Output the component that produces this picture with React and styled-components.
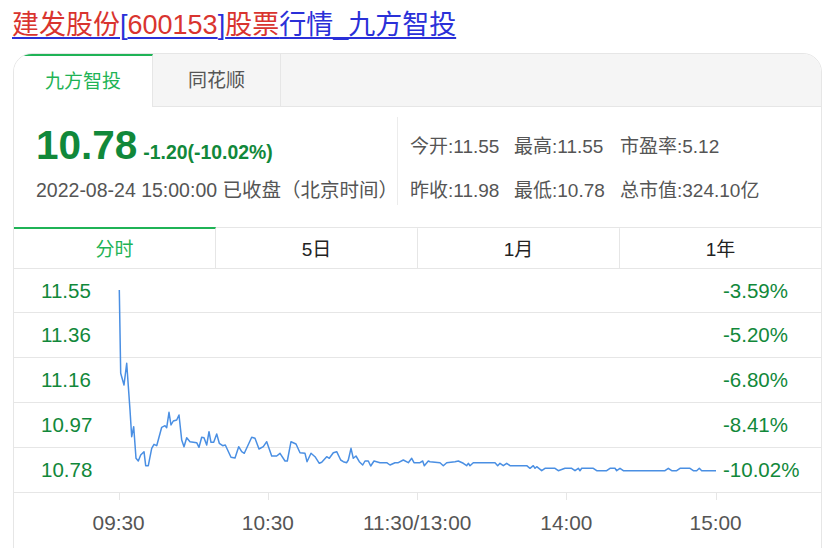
import React from "react";
import styled, { createGlobalStyle } from "styled-components";

const GlobalStyle = createGlobalStyle`
  body {
    margin: 0;
    background: #fff;
    font-family: "Liberation Sans", Arial, "Noto Sans CJK SC", sans-serif;
  }
`;

const GREEN = "#11883a";
const TAB_GREEN = "#1fb356";
const LINE = "#e6e6e6";

const LINE_POINTS = [
  [119.3, 290], [120.7, 373.3], [124, 385], [126.7, 363.3], [130, 410], [131.7, 436.7],
  [133.7, 426.7], [136, 458.3], [138.3, 461], [140.7, 455], [144, 451.7], [145.7, 465.7],
  [148.3, 465.7], [151.7, 448.3], [154, 444.3], [156.7, 445.7], [161.7, 427.3], [165, 425.7],
  [166.7, 427.7], [169, 412.3], [171, 425], [173.3, 421], [176.7, 420], [179, 415],
  [181.7, 440], [184, 446.7], [186.7, 437.7], [190, 441.7], [196.7, 442.7], [199, 447.3],
  [201.7, 437.3], [204, 437.7], [206.7, 445], [209, 431.7], [211, 442.3], [213.7, 442.3],
  [216.7, 434], [219.3, 443.3], [222.7, 445.7], [225.3, 445], [231, 457.3], [235, 458],
  [238.7, 446.7], [241.7, 451.7], [244.3, 453.3], [251.7, 437.3], [255, 438.3], [259, 449],
  [263.3, 446.7], [266.7, 441.7], [271.7, 456], [276.7, 456], [280, 453.3], [285, 461],
  [287.3, 461], [291, 441.7], [296, 444], [300, 452.7], [305, 453.3], [307, 461.7],
  [311, 453.3], [315, 456.7], [319.3, 463.3], [321.7, 462.3], [326.7, 456.7], [329.3, 458.3],
  [333.3, 452.7], [336.7, 451.7], [340.7, 460], [343.3, 461.7], [346.7, 462.7], [348.3, 460],
  [351, 448.3], [353.3, 458.3], [356, 456], [359.3, 461.7], [362.7, 465], [365, 461],
  [368.3, 461], [370.7, 466], [374, 461], [380, 462.7], [386.7, 462.7], [390, 465],
  [395, 462.7], [398.3, 462.7], [403.3, 460], [408.3, 462.7], [411.7, 458.3], [414, 462.7],
  [420, 462.7], [422.7, 461], [424.3, 465.7], [428.3, 461], [430, 461.7], [440, 462.7],
  [443.3, 465.7], [446.7, 462.7], [455, 461.7], [458.3, 461], [463.3, 463.3], [466.7, 465.7],
  [468.3, 463.3], [470, 465.7], [473.3, 462.7], [495, 462.7], [497.7, 465.7], [500, 463.3],
  [503.3, 465.7], [506.7, 463.3], [510, 465.7], [526.7, 465.7], [530, 468.3], [533.3, 465.7],
  [535, 468.3], [536.7, 466.7], [541.7, 470.7], [545, 468.3], [555, 468.3], [558.3, 470.7],
  [565, 468.3], [571.7, 468.3], [575, 470.7], [578.3, 468.3], [580, 470.7], [581.7, 468.3],
  [593.3, 468.3], [596.7, 470.7], [606.7, 470.7], [610, 468.3], [615, 468.3], [616.7, 470.7],
  [620, 468.3], [623.3, 470.7], [665, 470.7], [668.3, 468.3], [671.7, 470.7], [676.7, 470.7],
  [680, 468.3], [690, 468.3], [693.3, 470.7], [696.7, 470.7], [699.3, 468.3], [701.7, 470.7],
  [716, 470.7],
];

const ROWS = [
  ["11.55", "-3.59%"],
  ["11.36", "-5.20%"],
  ["11.16", "-6.80%"],
  ["10.97", "-8.41%"],
  ["10.78", "-10.02%"],
];

const STATS = [
  "今开:11.55", "最高:11.55", "市盈率:5.12",
  "昨收:11.98", "最低:10.78", "总市值:324.10亿",
];

const TIMES = ["09:30", "10:30", "11:30/13:00", "14:00", "15:00"];
const PERIODS = ["分时", "5日", "1月", "1年"];

const App = () => {
  return (
    <Page>
      <GlobalStyle />
      <Title href="#">
        <Em>建发股份</Em>[<Em>600153</Em>]<Em>股票</Em>行情_九方智投
      </Title>
      <Card>
        <SourceTabs>
          <SourceTab $active $w={139}>九方智投</SourceTab>
          <SourceTab $w={128}>同花顺</SourceTab>
        </SourceTabs>

        <Info>
          <QuoteCol>
            <PriceRow>
              <Price>10.78</Price>
              <Change>-1.20(-10.02%)</Change>
            </PriceRow>
            <DateLine>2022-08-24 15:00:00 已收盘（北京时间）</DateLine>
          </QuoteCol>
          <StatsGrid>
            {STATS.map((s) => (
              <Stat key={s}>{s}</Stat>
            ))}
          </StatsGrid>
        </Info>

        <PeriodTabs>
          {PERIODS.map((p, i) => (
            <PeriodTab key={p} $active={i === 0}>{p}</PeriodTab>
          ))}
        </PeriodTabs>

        <Chart>
          {ROWS.map(([price, pct]) => (
            <GridRow key={price}>
              <AxisLabel>{price}</AxisLabel>
              <AxisLabel>{pct}</AxisLabel>
            </GridRow>
          ))}
          <LineLayer viewBox="14 268 807 226" width="807" height="226">
            <polyline
              points={LINE_POINTS.map((p) => p.join(",")).join(" ")}
              fill="none"
              stroke="#4a8fe3"
              strokeWidth="1.5"
              strokeLinejoin="round"
            />
          </LineLayer>
        </Chart>

        <TimeAxis>
          {TIMES.map((t) => (
            <TimeTick key={t}>{t}</TimeTick>
          ))}
        </TimeAxis>
      </Card>
    </Page>
  );
};

const Page = styled.div`
  padding: 8px 0 0 12px;
  width: 821px;
`;

const Title = styled.a`
  display: inline-block;
  font-size: 27px;
  line-height: 35px;
  color: #2a30d8;
  text-decoration: underline;
  text-underline-offset: 3px;
`;

const Em = styled.span`
  color: #d9342f;
`;

const Card = styled.div`
  margin: 10px 0 0 1px;
  width: 809px;
  height: 520px;
  box-sizing: border-box;
  border: 1px solid ${LINE};
  border-radius: 19px 19px 0 0;
  overflow: hidden;
`;

const SourceTabs = styled.div`
  display: flex;
  height: 53px;
  box-sizing: border-box;
  background: #f5f5f5;
  border-bottom: 1px solid ${LINE};
`;

const SourceTab = styled.div`
  width: ${(p) => p.$w}px;
  height: ${(p) => (p.$active ? "53px" : "52px")};
  box-sizing: border-box;
  display: flex;
  align-items: center;
  justify-content: center;
  padding-bottom: ${(p) => (p.$active ? "4px" : "3px")};
  font-size: 19px;
  color: ${(p) => (p.$active ? TAB_GREEN : "#555")};
  background: ${(p) => (p.$active ? "#fff" : "transparent")};
  border-top: ${(p) => (p.$active ? `2px solid ${TAB_GREEN}` : "none")};
  border-right: 1px solid ${LINE};
`;

const Info = styled.div`
  display: flex;
  height: 120px;
  box-sizing: border-box;
  padding-top: 10px;
`;

const QuoteCol = styled.div`
  width: 384px;
  padding-left: 22px;
  box-sizing: border-box;
  border-right: 1px solid #ececec;
  height: 88px;
`;

const PriceRow = styled.div`
  display: flex;
  align-items: baseline;
  height: 50px;
  box-sizing: border-box;
  padding-top: 5px;
`;

const Price = styled.span`
  font-size: 40.5px;
  font-weight: bold;
  color: ${GREEN};
  margin-right: 6px;
`;

const Change = styled.span`
  font-size: 19.4px;
  font-weight: bold;
  color: ${GREEN};
`;

const DateLine = styled.div`
  margin-top: 8px;
  font-size: 19.5px;
  line-height: 30px;
  color: #555;
  white-space: nowrap;
`;

const StatsGrid = styled.div`
  display: grid;
  grid-template-columns: 104px 106px auto;
  grid-auto-rows: 44px;
  align-items: center;
  padding: 5px 0 0 12px;
`;

const Stat = styled.span`
  font-size: 19px;
  color: #555;
  white-space: nowrap;
`;

const PeriodTabs = styled.div`
  display: flex;
  border-top: 1px solid ${LINE};
  border-bottom: 1px solid ${LINE};
`;

const PeriodTab = styled.div`
  flex: 1;
  height: 41px;
  margin-top: -1px;
  box-sizing: border-box;
  display: flex;
  align-items: center;
  justify-content: center;
  padding-bottom: 2px;
  font-size: 19px;
  color: ${(p) => (p.$active ? TAB_GREEN : "#222")};
  border-top: 2px solid ${(p) => (p.$active ? TAB_GREEN : "transparent")};
  border-right: 1px solid ${LINE};
  &:last-child {
    border-right: none;
  }
`;

const Chart = styled.div`
  position: relative;
`;

const GridRow = styled.div`
  display: grid;
  grid-template-columns: 682px auto;
  align-items: center;
  height: 45px;
  box-sizing: border-box;
  padding-left: 27px;
  border-bottom: 1px solid ${LINE};
  &:first-child {
    height: 44px;
  }
`;

const AxisLabel = styled.span`
  font-size: 20.5px;
  color: ${GREEN};
`;

const LineLayer = styled.svg`
  position: absolute;
  left: 0;
  top: -1px;
  pointer-events: none;
`;

const TimeAxis = styled.div`
  display: flex;
  padding-left: 30px;
`;

const TimeTick = styled.div`
  position: relative;
  width: 149.25px;
  text-align: center;
  font-size: 20.8px;
  color: #555;
  padding-top: 18px;
  &::before {
    content: "";
    position: absolute;
    top: 0;
    left: 50%;
    width: 1px;
    height: 7px;
    background: ${LINE};
  }
`;

export default App;
